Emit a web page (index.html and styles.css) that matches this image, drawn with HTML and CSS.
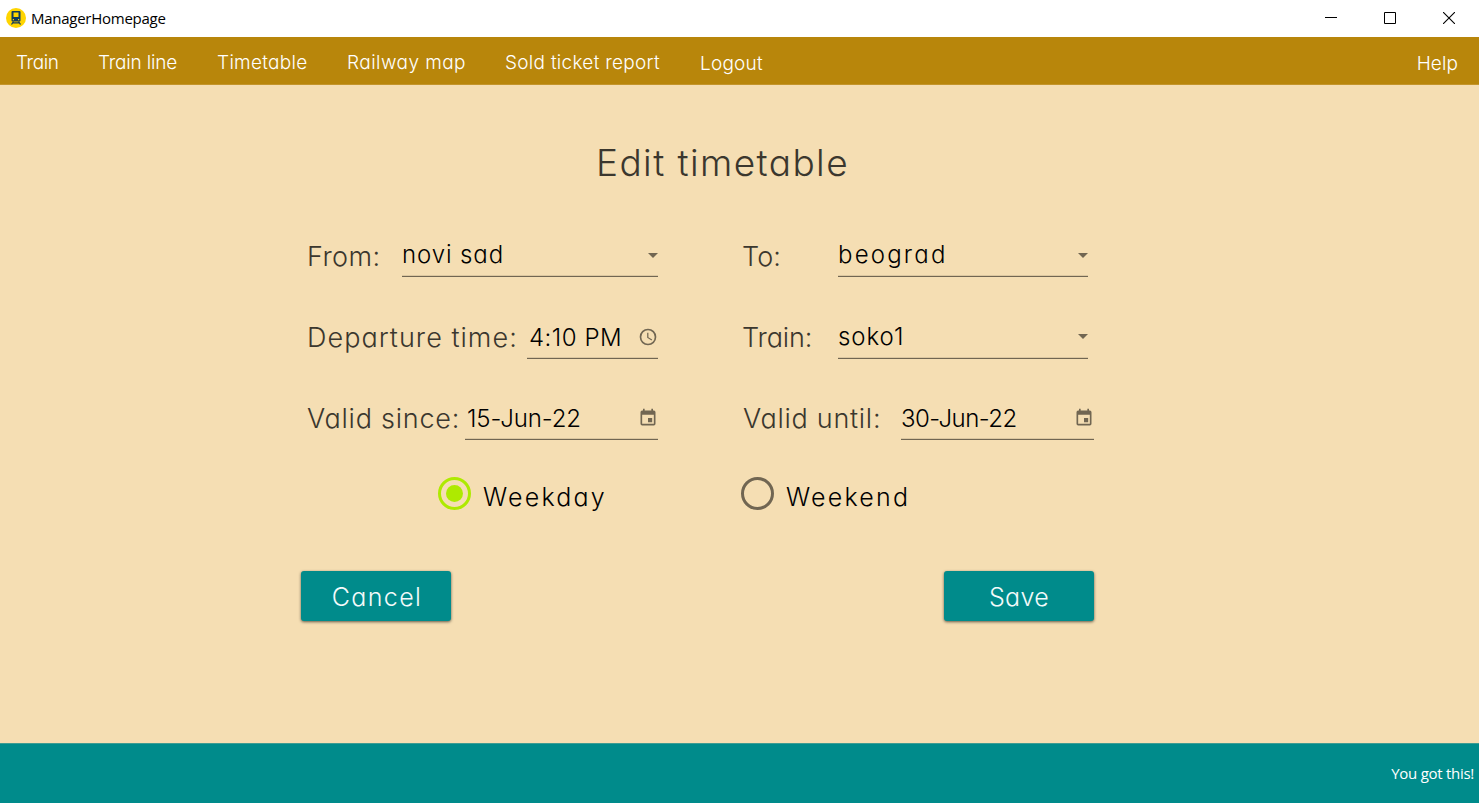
FILE: index.html
```
<!DOCTYPE html>
<html lang="en">
<head>
<meta charset="utf-8">
<title>ManagerHomepage</title>
<link rel="stylesheet" href="styles.css">
</head>
<body>
<header class="titlebar">
  <svg class="app-icon" viewBox="0 0 20 20" width="20" height="20"><circle cx="10" cy="10" r="10" fill="#ffd500"/><path fill="#123a5c" fill-rule="evenodd" d="M6.500 3h7q1 0 1 1v8.500q0 1-1 1h-7q-1 0-1-1V4q0-1 1-1zM7.500 4.500v4.500h5V4.500zM6.800 11v1.200H8V11zm5.200 0v1.200h1.200V11z"/><path stroke="#123a5c" stroke-width="1.300" d="M7.500 13.500 5.500 16.500M12.500 13.500l2 3M6.500 14.900h7"/></svg>
  <span class="app-name">ManagerHomepage</span>
  <div class="window-buttons">
    <svg width="12" height="12" viewBox="0 0 12 12"><path d="M0 5.500h12" stroke="#000"/></svg>
    <svg width="12" height="12" viewBox="0 0 12 12"><path d="M.5.5h11v11H.5z" fill="none" stroke="#000"/></svg>
    <svg width="12" height="12" viewBox="0 0 12 12"><path d="M0 0 12 12M12 0 0 12" stroke="#000" stroke-width="1.100"/></svg>
  </div>
</header>
<nav class="menu">
  <a class="t-train">Train</a>
  <a class="t-line">Train line</a>
  <a class="t-timetable">Timetable</a>
  <a class="t-map">Railway map</a>
  <a class="t-report">Sold ticket report</a>
  <a class="low t-logout">Logout</a>
  <a class="low t-help">Help</a>
</nav>
<main class="page">
  <h1 class="heading">Edit timetable</h1>
  <form class="form">
    <div class="fields">
      <div class="row row-first">
        <div class="field"><label class="w-from">From:</label><div class="input high"><span class="v-from">novi sad</span><svg class="arrow" width="10" height="5" viewBox="0 0 10 5"><path d="M0 0h10L5 5z"/></svg></div></div>
        <div class="field short"><label class="w-to">To:</label><div class="input high"><span class="v-to">beograd</span><svg class="arrow" width="10" height="5" viewBox="0 0 10 5"><path d="M0 0h10L5 5z"/></svg></div></div>
      </div>
      <div class="row">
        <div class="field"><label class="w-departure">Departure time:</label><div class="input indent"><span class="v-time">4:10 PM</span><svg class="icon" width="20" height="20" viewBox="0 0 24 24"><path d="M12 20a8 8 0 1 0 0-16 8 8 0 0 0 0 16M12 2a10 10 0 1 1 0 20 10 10 0 0 1 0-20m.5 5v5.250l4.500 2.670-.75 1.230L11 13V7z"/></svg></div></div>
        <div class="field short"><label class="w-train">Train:</label><div class="input high"><span class="v-train">soko1</span><svg class="arrow" width="10" height="5" viewBox="0 0 10 5"><path d="M0 0h10L5 5z"/></svg></div></div>
      </div>
      <div class="row">
        <div class="field"><label class="w-since">Valid since:</label><div class="input indent"><span class="v-since">15-Jun-22</span><svg class="icon" width="20" height="20" viewBox="0 0 24 24"><path d="M19 3h-1V1h-2v2H8V1H6v2H5a2 2 0 0 0-2 2v14a2 2 0 0 0 2 2h14a2 2 0 0 0 2-2V5a2 2 0 0 0-2-2m0 16H5V8h14zm-2-7h-5v5h5z"/></svg></div></div>
        <div class="field"><label class="w-until">Valid until:</label><div class="input"><span class="v-until">30-Jun-22</span><svg class="icon" width="20" height="20" viewBox="0 0 24 24"><path d="M19 3h-1V1h-2v2H8V1H6v2H5a2 2 0 0 0-2 2v14a2 2 0 0 0 2 2h14a2 2 0 0 0 2-2V5a2 2 0 0 0-2-2m0 16H5V8h14zm-2-7h-5v5h5z"/></svg></div></div>
      </div>
    </div>
    <div class="options">
      <div class="option"><span class="radio selected"></span><span class="option-text">Weekday</span></div>
      <div class="option"><span class="radio"></span><span class="option-text">Weekend</span></div>
    </div>
    <div class="actions">
      <button type="button" class="button cancel">Cancel</button>
      <button type="button" class="button save">Save</button>
    </div>
  </form>
</main>
<footer class="status">You got this!</footer>
</body>
</html>
```
FILE: styles.css
```
*{box-sizing:border-box}
body{margin:0;height:803px;display:flex;flex-direction:column;background:#f5deb3;font-family:Inter,"Liberation Sans",sans-serif;font-weight:300;font-feature-settings:"cv11";overflow:hidden}

.titlebar{height:37px;flex:none;display:flex;align-items:center;background:#fff;padding:0 24px 0 6px}
.app-icon{margin-bottom:1px}
.app-name{font:400 15px/20px "Open Sans",sans-serif;letter-spacing:-.26px;margin:0 0 2px 5px;color:#000}
.window-buttons{margin-left:auto;display:flex;gap:47px;margin-bottom:1px}

.menu{height:48px;flex:none;display:grid;grid-template-columns:82px 119px 129px 158px 195px 1fr auto;padding:0 21px 0 16px;background:#b8860b;border-bottom:1px solid #c4952b;color:#fff;font-size:19px;line-height:52px}
.menu .low{line-height:54px;padding-left:1px}
.t-train{letter-spacing:-.4px}
.t-line{letter-spacing:-.2px}
.t-timetable{letter-spacing:.3px}
.t-map{letter-spacing:.45px;padding-left:1px}
.t-report{letter-spacing:.28px;padding-left:1px}
.t-logout{letter-spacing:.22px}
.t-help{letter-spacing:.1px}

.page{flex:1;padding:47px 0 0 301px}
.heading{margin:0;width:843px;height:60px;text-align:center;font-size:37px;font-weight:300;line-height:62px;letter-spacing:1.42px;color:#3b372e}
.form{width:793px;padding-top:45px}
.fields{padding-left:7px;display:flex;flex-direction:column;gap:41px}
.row{display:grid;grid-template-columns:350px 351px;gap:85px}
.row-first{margin-bottom:1px}
.field{display:flex;height:40px}
.short{width:345px}

label{flex:none;font-size:27px;line-height:38px;margin-left:-1px;color:#3b372e;white-space:nowrap}
.row-first label{line-height:40px}
.w-from{width:95px;letter-spacing:.45px}
.w-to{width:96px;letter-spacing:.1px}
.w-train{width:96px;letter-spacing:-.1px}
.w-departure{width:220px;letter-spacing:1.03px}
.w-since{width:158px;letter-spacing:.75px}
.w-until{width:158px;letter-spacing:.72px;margin-left:0}

.input{flex:1;display:flex;justify-content:space-between;border-bottom:1px solid #716652;box-shadow:inset 0 -1px 0 #dcc7a0;font-size:24px;line-height:37px;color:#000;white-space:nowrap}
.high{line-height:35px}
.indent{padding-left:2px}
.input svg{fill:#716652;flex:none}
.arrow{margin-top:16px}
.row:not(.row-first) .arrow{margin-top:15px}
.icon{margin-top:8px}
.v-from{letter-spacing:.9px}
.v-to{letter-spacing:2.2px}
.v-time{letter-spacing:.5px}
.v-train{letter-spacing:.95px}
.v-since{letter-spacing:-.1px}
.v-until{letter-spacing:-.55px}

.options{display:grid;grid-template-columns:303px auto;padding:37px 0 0 137px}
.option{display:flex}
.radio{width:33px;height:33px;border:3px solid #716652;border-radius:50%;display:grid;place-items:center}
.selected{border-color:#aeea00}
.selected::after{content:"";width:17px;height:17px;border-radius:50%;background:#aeea00}
.option-text{margin-left:12px;font-size:25px;line-height:40px;height:33px;letter-spacing:2.2px}

.actions{display:flex;justify-content:space-between;padding-top:61px}
.button{width:150px;height:50px;border:0;border-radius:3px;background:#008b8b;color:#f3fafa;font:inherit;font-size:25px;line-height:52px;padding:0;box-shadow:0 1px 3px rgba(0,0,0,.6)}
.cancel{letter-spacing:1.4px;padding-left:2px}
.save{letter-spacing:.3px}

.status{height:60px;flex:none;background:#008b8b;border-top:1px solid #3d9c93;color:#fff;text-align:right;padding-right:5px;font:400 15px/58px "Open Sans",sans-serif;letter-spacing:-.28px}
```
